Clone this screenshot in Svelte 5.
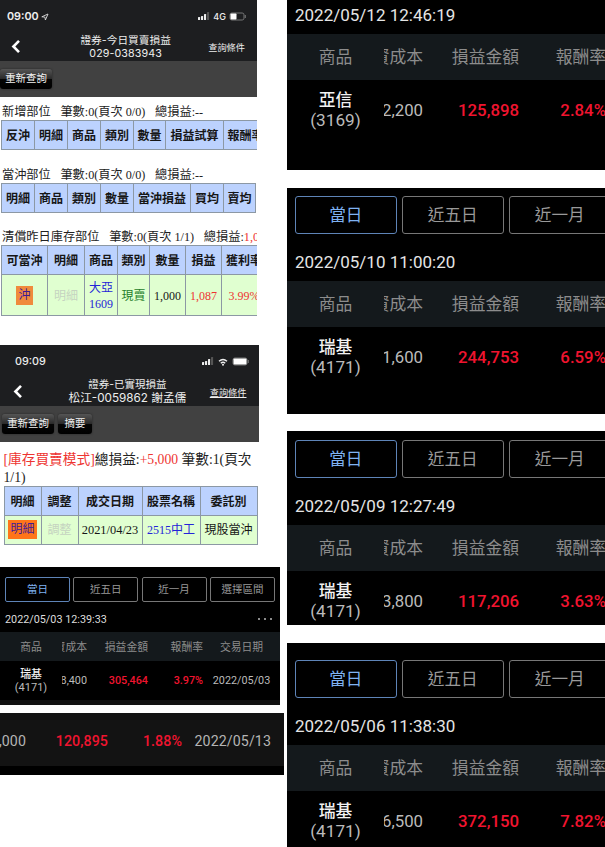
<script>
  const tables = [
    { title: '新增部位', page: '0/0', total: '--', cols: [33, 33, 33, 33, 32, 58, 44], heads: ['反沖', '明細', '商品', '類別', '數量', '損益試算', '報酬率'] },
    { title: '當沖部位', page: '0/0', total: '--', cols: [33, 33, 33, 33, 57, 33, 32], heads: ['明細', '商品', '類別', '數量', '當沖損益', '買均', '賣均'] },
    { title: '清償昨日庫存部位', page: '1/1', total: '1,087', red: true, cols: [46, 37, 33, 32, 36, 36, 45], heads: ['可當沖', '明細', '商品', '類別', '數量', '損益', '獲利率'], row: true }
  ];
  const cards = [
    { height: 169.5, gap: 18, date: '2022/05/12 12:46:19', dateH: 33.5, name: '亞信', code: '(3169)', cost: '62,200', amount: '125,898', rate: '2.84%' },
    { height: 226, gap: 17.5, tabPad: 8, date: '2022/05/10 11:00:20', dateH: 46.5, name: '瑞基', code: '(4171)', cost: '31,600', amount: '244,753', rate: '6.59%' },
    { height: 194, gap: 18, tabPad: 8.5, date: '2022/05/09 12:27:49', dateH: 46.5, name: '瑞基', code: '(4171)', cost: '23,800', amount: '117,206', rate: '3.63%' },
    { height: 204, gap: 0, tabPad: 16.5, date: '2022/05/06 11:38:30', dateH: 46.5, name: '瑞基', code: '(4171)', cost: '66,500', amount: '372,150', rate: '7.82%' }
  ];
  const px = (cols) => cols.map((c) => c + 'px').join(' ');
</script>

{#snippet signal(n)}
  <svg class="signal" width="12" height="9" viewBox="0 0 12 9">
    {#each [3, 4, 6, 8] as h, i}
      <rect x={i * 3} y={8 - h} width="2.1" height={h} rx=".5" fill={i < n ? '#eee' : '#555'} />
    {/each}
  </svg>
{/snippet}

{#snippet battery(level)}
  <svg width="18" height="9" viewBox="0 0 18 9">
    <rect x="1" y="1" width="14" height="7" rx="1.8" fill="none" stroke="#777" />
    <rect x="1.5" y="1.5" width={level} height="6" rx=".8" fill="#fff" />
    <path d="M16.3 3v3" stroke="#777" />
  </svg>
{/snippet}

{#snippet chevron()}
  <svg class="back" width="10" height="15" viewBox="0 0 10 15">
    <path d="M8 1.8L2.4 7.5L8 13.2" fill="none" stroke="#fff" stroke-width="2.6" />
  </svg>
{/snippet}

<main>
  <section class="left">
    <article class="broker">
      <header>
        <div class="status">
          <b>09:00</b>
          <svg class="loc" width="8" height="8" viewBox="0 0 8 8"><path d="M.8 3.8L7 1L4.4 7L3.9 4.1Z" fill="none" stroke="#ddd" stroke-width=".9" /></svg>
          <span class="grow"></span>
          {@render signal(3)}<b class="net">4G</b>{@render battery(6)}
        </div>
        <div class="nav">
          {@render chevron()}
          <div class="title one"><div>證券-今日買賣損益</div><div class="acct">029-0383943</div></div>
          <span class="query">查詢條件</span>
        </div>
      </header>
      <div class="tools flush"><button>重新查詢</button></div>
    </article>

    <div class="lists">
      {#each tables as t}
        <div class="list">
          <p>{t.title}<i></i>筆數:0(頁次 {t.page})<i></i>總損益:<span class:red={t.red}>{t.total}</span></p>
          <div class="table" style:grid-template-columns={px(t.cols)}>
            {#each t.heads as h}<div class="th">{h}</div>{/each}
            {#if t.row}
              <div class="td"><span class="tag">沖</span></div>
              <div class="td faint">明細</div>
              <div class="td blue">大亞<br />1609</div>
              <div class="td green">現賣</div>
              <div class="td">1,000</div>
              <div class="td red">1,087</div>
              <div class="td red">3.99%</div>
            {/if}
          </div>
        </div>
      {/each}
    </div>

    <article class="broker second">
      <header>
        <div class="status">
          <b>09:09</b>
          <span class="grow"></span>
          {@render signal(3)}
          <svg class="wifi" width="10" height="8" viewBox="0 0 10 8"><path d="M1 3.2Q5-.4 9 3.2M2.8 5.2Q5 3.2 7.2 5.2" fill="none" stroke="#eee" stroke-width="1.4" /><circle cx="5" cy="6.8" r="1" fill="#eee" /></svg>
          {@render battery(13)}
        </div>
        <div class="nav">
          {@render chevron()}
          <div class="title two"><div>證券-已實現損益</div><div class="acct">松江-0059862 謝孟儒</div></div>
          <span class="query under">查詢條件</span>
        </div>
      </header>
      <div class="tools"><button>重新查詢</button><button class="short">摘要</button></div>
    </article>

    <div class="realized">
      <p><span class="red">[庫存買賣模式]</span>總損益:<span class="red">+5,000</span> 筆數:1(頁次<br />1/1)</p>
      <div class="table" style:grid-template-columns={px([37, 37, 64, 58, 57])}>
        {#each ['明細', '調整', '成交日期', '股票名稱', '委託別'] as h}<div class="th">{h}</div>{/each}
        <div class="td"><span class="tag wide">明細</span></div>
        <div class="td faint">調整</div>
        <div class="td date-cell">2021/04/23</div>
        <div class="td blue">2515中工</div>
        <div class="td">現股當沖</div>
      </div>
    </div>

    <article class="mini">
      <div class="tabs"><span class="on">當日</span><span>近五日</span><span>近一月</span><span>選擇區間</span></div>
      <div class="date"><span>2022/05/03 12:39:33</span><span class="dots"><i></i><i></i><i></i></span></div>
      <div class="cols head"><span class="mid">商品</span><span class="clip">資成本</span><span>損益金額</span><span>報酬率</span><span class="mid">交易日期</span></div>
      <div class="cols body"><span class="mid stock"><b>瑞基</b><em>(4171)</em></span><span class="clip">18,400</span><span class="gain">305,464</span><span class="gain">3.97%</span><span class="mid">2022/05/03</span></div>
    </article>

    <article class="strip">
      <div><span>,000</span><span class="gain">120,895</span><span class="gain">1.88%</span><span>2022/05/13</span></div>
    </article>
  </section>

  <section class="right">
    {#each cards as c}
      <article class="card" style:height={c.height + 'px'} style:margin-bottom={c.gap + 'px'}>
        {#if c.tabPad}
          <div class="tabs" style:margin-top={c.tabPad + 'px'}><span class="on">當日</span><span>近五日</span><span>近一月</span></div>
        {/if}
        <div class="date" class:first={!c.tabPad} style:height={c.dateH + 'px'}>{c.date}</div>
        <div class="cols head"><span class="mid">商品</span><span class="clip">資成本</span><span>損益金額</span><span>報酬率</span></div>
        <div class="cols body"><span class="mid stock"><b>{c.name}</b><em>{c.code}</em></span><span class="clip">{c.cost}</span><span class="gain">{c.amount}</span><span class="gain">{c.rate}</span></div>
      </article>
    {/each}
  </section>
</main>

<style>
  :global(body) { background: #fff; }
  main { display: flex; width: 605px; height: 847px; overflow: hidden; background: #fff; font-family: Roboto, 'Noto Sans CJK TC', sans-serif; white-space: nowrap; }
  .left { width: 287px; flex: none; display: flex; flex-direction: column; }
  .right { width: 318px; flex: none; overflow: hidden; }
  svg { display: block; flex: none; }
  p { margin: 0; }
  .grow { flex: 1; }

  .broker { width: 257px; height: 96.5px; flex: none; background: #414141; color: #eee; font-family: Inter, 'Noto Sans CJK TC', sans-serif; }
  .broker header { height: 61px; background: #1d1e20; overflow: hidden; }
  .status { display: flex; align-items: center; height: 12px; margin-top: 10.5px; padding: 0 10px 0 7px; font-size: 10.8px; line-height: 12px; }
  .status b { font-weight: 600; }
  .status .loc { margin-left: 2px; }
  .status .net { font-size: 9px; font-weight: 500; margin: 0 3px 0 3px; }
  .nav { display: flex; align-items: center; height: 32px; margin-top: 8px; padding: 0 12px 0 11px; }
  .title { flex: 1; text-align: center; font-size: 10.7px; line-height: 13px; }
  .title.one { padding-left: 22px; }
  .title .acct { font-size: 10.7px; letter-spacing: .1px; }
  .query { font-size: 9.2px; }
  .tools { display: flex; gap: 4px; padding: 8px 2px 0; }
  .tools.flush { padding-left: 0; }
  button { width: 52px; height: 20px; padding: 0; border: 0; border-radius: 3px; color: #f2f2f2; font: 10.4px/20px Inter, 'Noto Sans CJK TC', sans-serif; background: linear-gradient(#555 0, #2b2b2b 48%, #050505 52%, #000); box-shadow: 0 0 2px #222; }
  button.short { width: 34px; }

  .second { width: 258.5px; margin-top: 28.5px; }
  .second .status { padding-left: 15px; padding-right: 9px; }
  .second .status b { font-weight: 500; }
  .second .wifi { margin: 0 4px; }
  .second .nav { padding-left: 13px; }
  .title.two { padding-left: 22px; font-size: 10.5px; }
  .title.two .acct { font-size: 11.7px; line-height: 15px; letter-spacing: 0; }
  .under { text-decoration: underline; text-underline-offset: 1px; }

  .lists { width: 257px; height: 220px; flex: none; overflow: hidden; font-family: 'Liberation Serif', 'Noto Sans CJK TC', serif; color: #222; }
  .list { padding: 6.5px 0 0 1px; height: 56px; }
  .list p { height: 17px; font-size: 12.2px; line-height: 19px; padding-left: 1px; }
  .list p i { display: inline-block; width: 9.7px; }
  .table { display: grid; width: max-content; border: solid #8c98a4; border-width: 1px 0 0 1px; font-size: 12px; color: #161616; }
  .th, .td { box-sizing: border-box; border: solid #8c98a4; border-width: 0 1px 1px 0; display: flex; align-items: center; justify-content: center; overflow: hidden; }
  .th { height: 29px; background: #bcd2fe; font-weight: 700; }
  .td { height: 41px; background: #e0ffd0; line-height: 16px; text-align: center; padding-top: 1px; }
  .td.date-cell { font-size: 12.4px; }
  .red, .td.red { color: #ee3431; }
  .blue { color: #2424d8; }
  .green { color: #26802b; }
  .faint { color: #c5d3c0; }
  .tag { width: 17px; height: 19px; line-height: 19px; background: #f08a3c; color: #3d1b96; }
  .tag.wide { width: 29px; background: #ff7519; }

  .realized { height: 125.5px; flex: none; padding-left: 3.5px; font-family: 'Liberation Serif', 'Noto Sans CJK TC', serif; color: #222; }
  .realized p { font-size: 13.7px; line-height: 18px; height: 35px; padding-top: 9px; }
  .realized .td { height: 29px; padding-top: 0; }

  .tabs { display: flex; }
  .tabs span { box-sizing: border-box; flex: none; border: 1px solid #777; border-radius: 2px; text-align: center; color: #999; }
  .tabs .on { border-color: #5e84b8; color: #7fb2f2; }
  .cols { display: grid; align-items: center; text-align: right; color: #bbb; }
  .head { background: #14191c; color: #8c8c8c; }
  .mid { text-align: center; }
  .clip { display: flex; justify-content: flex-end; overflow: hidden; }
  .stock b, .stock em { display: block; font-style: normal; }
  .stock b { color: #f2f2f2; font-weight: 500; }
  .gain { color: #f0142f; font-weight: 500; }

  .mini { width: 280px; height: 137.5px; flex: none; box-sizing: border-box; background: #000; border-bottom: 5px solid #111; font-size: 10.8px; }
  .mini .tabs { gap: 3.3px; padding: 10px 0 0 5px; }
  .mini .tabs span { width: 65px; height: 24.5px; line-height: 23px; font-size: 10.5px; }
  .mini .date { display: flex; justify-content: space-between; align-items: center; height: 30px; padding: 5px 8px 0 5px; box-sizing: border-box; color: #ddd; }
  .dots { display: flex; gap: 3.5px; }
  .dots i { width: 2.5px; height: 2.5px; background: #bbb; border-radius: 50%; }
  .mini .cols { grid-template-columns: 62px 25px 61px 55px 77px; }
  .mini .head { height: 29px; }
  .mini .body { height: 40px; font-size: 10.8px; }
  .mini .stock { line-height: 13px; }
  .mini .stock em { font-size: 11px; }

  .strip { width: 284px; height: 62px; flex: none; box-sizing: border-box; margin-top: 8.5px; background: #131313; border-bottom: 9px solid #000; font-size: 14.2px; color: #b5b5b5; overflow: hidden; }
  .strip div { display: grid; grid-template-columns: 26px 82px 74px 89px; height: 56px; align-items: center; text-align: right; letter-spacing: .1px; }
  .strip span:first-child { display: flex; justify-content: flex-end; }

  .card { background: #000; overflow: hidden; font-size: 16.8px; }
  .card .tabs { gap: 5.5px; padding-left: 8px; }
  .card .tabs span { width: 101.5px; height: 38.5px; line-height: 37px; border-radius: 3px; font-size: 16.6px; }
  .card .date { box-sizing: border-box; padding: 8.5px 0 0 8px; line-height: 38.5px; font-size: 17px; color: #e5e5e5; }
  .card .date.first { padding-top: 0; line-height: 31px; }
  .card .cols { grid-template-columns: 97px 39px 96px 87px; }
  .card .head { height: 46.5px; line-height: 24px; }
  .card .head span { padding-top: 1px; }
  .card .body { height: 60px; }
  .card .stock { line-height: 20px; }
  .card .stock em { font-size: 17.2px; }
</style>
